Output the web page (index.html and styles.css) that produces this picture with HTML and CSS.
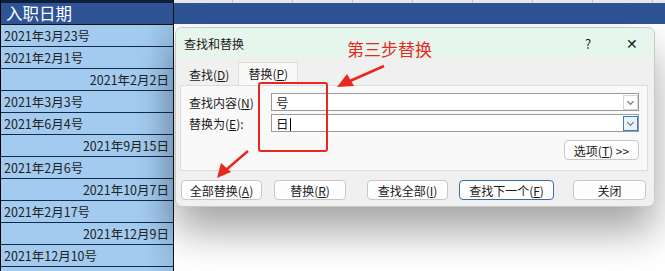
FILE: index.html
```html
<!DOCTYPE html>
<html lang="zh">
<head>
    <meta charset="UTF-8">
    <title>查找和替换</title>
    <link rel="stylesheet" href="styles.css">
</head>
<body>

    <div class="col">
        <div class="head">入职日期</div>
        <div class="cell">2021年3月23号</div>
        <div class="cell">2021年2月1号</div>
        <div class="cell right">2021年2月2日</div>
        <div class="cell">2021年3月3号</div>
        <div class="cell">2021年6月4号</div>
        <div class="cell right">2021年9月15日</div>
        <div class="cell">2021年2月6号</div>
        <div class="cell right">2021年10月7日</div>
        <div class="cell">2021年2月17号</div>
        <div class="cell right">2021年12月9日</div>
        <div class="cell">2021年12月10号</div>
        <div class="cell last"></div>
    </div>

    <div class="sheet">
        <div class="grid"></div>
        <div class="band"></div>

        <div class="dialog">
            <div class="titlebar">
                <span class="title">查找和替换</span>
                <span class="help">?</span>
                <span class="close">✕</span>
            </div>
            <div class="body">
                <div class="tabs">
                    <div class="tab">查找(<u>D</u>)</div>
                    <div class="tab active">替换(<u>P</u>)</div>
                </div>
                <div class="panel">
                    <div class="row">
                        <label>查找内容(<u>N</u>)</label>
                        <div class="field"><span>号</span><i class="drop"></i></div>
                    </div>
                    <div class="row">
                        <label>替换为(<u>E</u>):</label>
                        <div class="field"><span>日<b class="caret"></b></span><i class="drop focus"></i></div>
                    </div>
                    <div class="opts">
                        <button class="btn small">选项(<u>T</u>) &gt;&gt;</button>
                    </div>
                </div>
                <div class="actions">
                    <button class="btn b1">全部替换(<u>A</u>)</button>
                    <button class="btn b2">替换(<u>R</u>)</button>
                    <button class="btn b3">查找全部(<u>I</u>)</button>
                    <button class="btn b4 focus">查找下一个(<u>F</u>)</button>
                    <button class="btn b5">关闭</button>
                </div>
            </div>
        </div>
    </div>

    <!-- annotations drawn over the screenshot -->
    <div class="note">第三步替换</div>
    <div class="mark"></div>
    <svg class="arrows" width="665" height="271" viewBox="0 0 665 271">
        <g fill="#e8281f" stroke="#e8281f">
            <line x1="384" y1="66" x2="350" y2="81" stroke-width="2.5"/>
            <polygon points="337,87 347,74 354,86" stroke="none"/>
            <line x1="248" y1="151" x2="227" y2="169" stroke-width="2.5"/>
            <polygon points="217,178 221,163 231,172" stroke="none"/>
        </g>
    </svg>

</body>
</html>
```

FILE: styles.css
```css
* {
    box-sizing: border-box;
}

body {
    margin: 0;
    width: 665px;
    height: 271px;
    overflow: hidden;
    display: flex;
    position: relative;
    background: white;
    font-family: "Noto Sans CJK SC", "Noto Sans", sans-serif;
    color: #1a1a1a;
}

.col {
    width: 174px;
    height: 271px;
    flex: none;
    overflow: hidden;
    border-left: 1px solid #000;
    border-right: 1px solid #111;
    background: #0d1f3a;
}

.head {
    height: 22px;
    margin-top: 3px;
    background: #2f5496;
    color: white;
    font-size: 16.5px;
    line-height: 21px;
    padding-left: 5px;
    border-bottom: 1px solid #111;
}

.cell {
    height: 22px;
    border-bottom: 1px solid #14284a;
    background: linear-gradient(to right, #a2cbef 85%, #96bde2);
    font-size: 12.5px;
    line-height: 22px;
    padding: 0 4px 0 3px;
    color: #222;
}

.cell.last {
    height: 4px;
    border: none;
}

.cell.right {
    text-align: right;
}

.sheet {
    flex: 1;
    display: flex;
    flex-direction: column;
}

.grid {
    height: 3px;
    background: #e7e7e7 repeating-linear-gradient(to right, transparent 0 58px, #c6c6c6 58px 59px, transparent 59px 60px);
}

.band {
    height: 21px;
    background: #2e5394;
}

.dialog {
    margin: 3px 10px 0 1px;
    height: 180px;
    border: 1px solid #c9c9c9;
    border-radius: 7px;
    background: #f0f0f0;
    box-shadow: 0 24px 42px rgba(0, 0, 0, 0.36);
    overflow: hidden;
    font-size: 12px;
}

.titlebar {
    height: 30px;
    background: #e7f6ec;
    display: flex;
    align-items: center;
    padding-left: 8px;
}

.title {
    flex: 1;
    font-size: 12px;
}

.help {
    width: 41px;
    font-size: 13px;
}

.close {
    width: 28px;
    font-size: 14px;
}

.body {
    padding: 4px 6px 0 4px;
}

.tabs {
    display: flex;
    height: 23px;
    align-items: flex-end;
    padding-left: 2px;
}

.tab {
    padding: 0 9px 0 7px;
    height: 21px;
    line-height: 21px;
}

.tab.active {
    height: 23px;
    line-height: 22px;
    background: #f9f9f9;
    border: 1px solid #dcdcdc;
    border-bottom: none;
    padding: 0 9px 0 9px;
}

.panel {
    height: 86px;
    background: #f9f9f9;
    border: 1px solid #dcdcdc;
    padding: 7px 8px 0 8px;
}

.row {
    display: flex;
    align-items: center;
    margin-bottom: 3px;
}

.row label {
    width: 82px;
}

.field {
    flex: 1;
    height: 18px;
    border: 1px solid #9a9a9a;
    background: white;
    display: flex;
    align-items: center;
    padding-left: 4px;
}

.field span {
    flex: 1;
    font-size: 12.5px;
}

.caret {
    display: inline-block;
    width: 1px;
    height: 13px;
    background: #000;
    vertical-align: -2px;
    margin-left: 1px;
}

.drop {
    width: 15px;
    height: 15px;
    margin-right: 0;
    border: 1px solid #d5d5d5;
    background: white;
    position: relative;
}

.drop::after {
    content: "";
    position: absolute;
    left: 4px;
    top: 3px;
    width: 4px;
    height: 4px;
    border-right: 1px solid #666;
    border-bottom: 1px solid #666;
    transform: rotate(45deg);
}

.drop.focus {
    border-color: #3a7bc8;
    background: #e9f1fb;
}

.opts {
    display: flex;
    justify-content: flex-end;
    margin-top: 8px;
}

.btn {
    font-family: inherit;
    font-size: 12px;
    color: #1a1a1a;
    height: 20px;
    padding: 0;
    background: #fdfdfd;
    border: 1px solid #c8c8c8;
    border-radius: 4px;
}

.btn.small {
    width: 75px;
}

.btn.focus {
    border-color: #3a6ea5;
}

.actions {
    display: flex;
    margin-top: 9px;
    padding-left: 1px;
}

.b1 { width: 81px; }
.b2 { width: 72px; margin-left: 12px; }
.b3 { width: 81px; margin-left: 21px; }
.b4 { width: 95px; margin-left: 11px; }
.b5 { width: 73px; margin-left: 19px; }

u {
    text-decoration: underline;
}

.note {
    position: absolute;
    left: 347px;
    top: 36px;
    color: #e8281f;
    font-size: 17px;
}

.mark {
    position: absolute;
    left: 258px;
    top: 82px;
    width: 70px;
    height: 70px;
    border: 2px solid #e8281f;
    border-radius: 3px;
}

.arrows {
    position: absolute;
    left: 0;
    top: 0;
}
```
